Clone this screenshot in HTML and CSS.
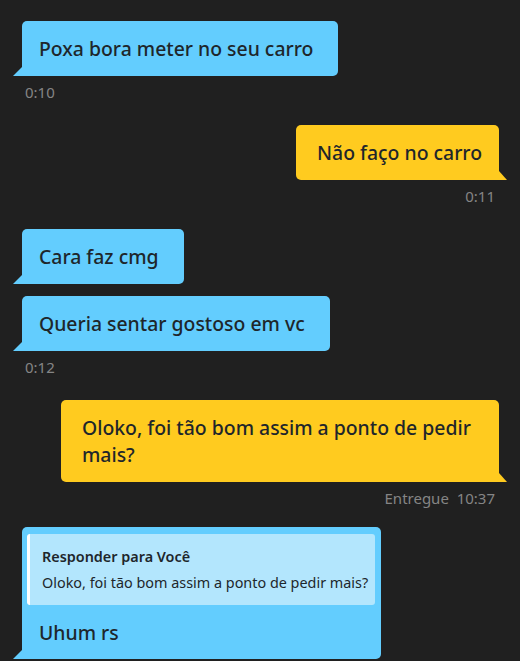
FILE: index.html
```html
<!DOCTYPE html>
<html lang="pt-BR">
    <head>
        <meta charset="utf-8">
        <link rel="stylesheet" href="styles.css">
    </head>
    <body>
        <div class="chat">
            <div class="group in">
                <div class="bubble">Poxa bora meter no seu carro</div>
                <div class="time">0:10</div>
            </div>
            <div class="group out">
                <div class="bubble">Não faço no carro</div>
                <div class="time">0:11</div>
            </div>
            <div class="group in">
                <div class="bubble">Cara faz cmg</div>
                <div class="bubble">Queria sentar gostoso em vc</div>
                <div class="time">0:12</div>
            </div>
            <div class="group out">
                <div class="bubble">Oloko, foi tão bom assim a ponto de pedir mais?</div>
                <div class="time">Entregue&nbsp; 10:37</div>
            </div>
            <div class="group in last">
                <div class="bubble reply">
                    <div class="quote">
                        <div class="quote_who">Responder para Você</div>
                        <div class="quote_text">Oloko, foi tão bom assim a ponto de pedir mais?</div>
                    </div>
                    <div class="reply_text">Uhum rs</div>
                </div>
            </div>
        </div>
    </body>
</html>
```

FILE: styles.css
```css
body{
    margin: 0;
    background-color: #202020;
    font-family: "Noto Sans", "DejaVu Sans", sans-serif;
}
div.chat{
    display: flex;
    flex-direction: column;
    padding: 21px 21px 0 22px;
}
div.group{
    display: flex;
    flex-direction: column;
    gap: 12px;
    margin-bottom: 24px;
}
div.group.last{
    margin-top: -4px;
}
div.group.in{
    align-items: flex-start;
}
div.group.out{
    align-items: flex-end;
}
div.bubble{
    position: relative;
    max-width: 438px;
    box-sizing: border-box;
    padding: 14px 25px 14px 17px;
    font-size: 19.4px;
    font-weight: 500;
    line-height: 27px;
    color: #1e262b;
    background-color: #63cdfe;
    border-radius: 5px 5px 5px 0;
}
div.group.out div.bubble{
    padding: 14px 17px 14px 21px;
    background-color: #ffcb1f;
    border-radius: 5px 5px 0 5px;
}
div.bubble::before{
    content: "";
    position: absolute;
    bottom: 0;
    left: -9px;
    width: 9px;
    height: 9px;
    background-color: inherit;
    clip-path: polygon(100% 0, 100% 100%, 0 100%);
}
div.group.out div.bubble::before{
    left: auto;
    right: -8px;
    width: 8px;
    clip-path: polygon(0 0, 100% 100%, 0 100%);
}
div.time{
    margin-top: -5px;
    font-size: 15px;
    line-height: 18px;
    color: #858585;
    padding: 0 3px;
}
div.group.out div.time{
    padding: 0 4px 0 0;
}
div.bubble.reply{
    padding: 7px 6px 13px 5px;
}
div.quote{
    padding: 12px 7px 11px 12px;
    border-left: 3px solid #fff;
    border-radius: 3px;
    background-color: #b3e6fd;
    font-size: 14.4px;
    line-height: 22px;
    display: flex;
    flex-direction: column;
    gap: 4px;
}
div.quote_who{
    font-weight: 600;
}
div.quote_text{
    font-weight: 400;
}
div.reply_text{
    margin-top: 14px;
    padding: 0 12px;
}
```
